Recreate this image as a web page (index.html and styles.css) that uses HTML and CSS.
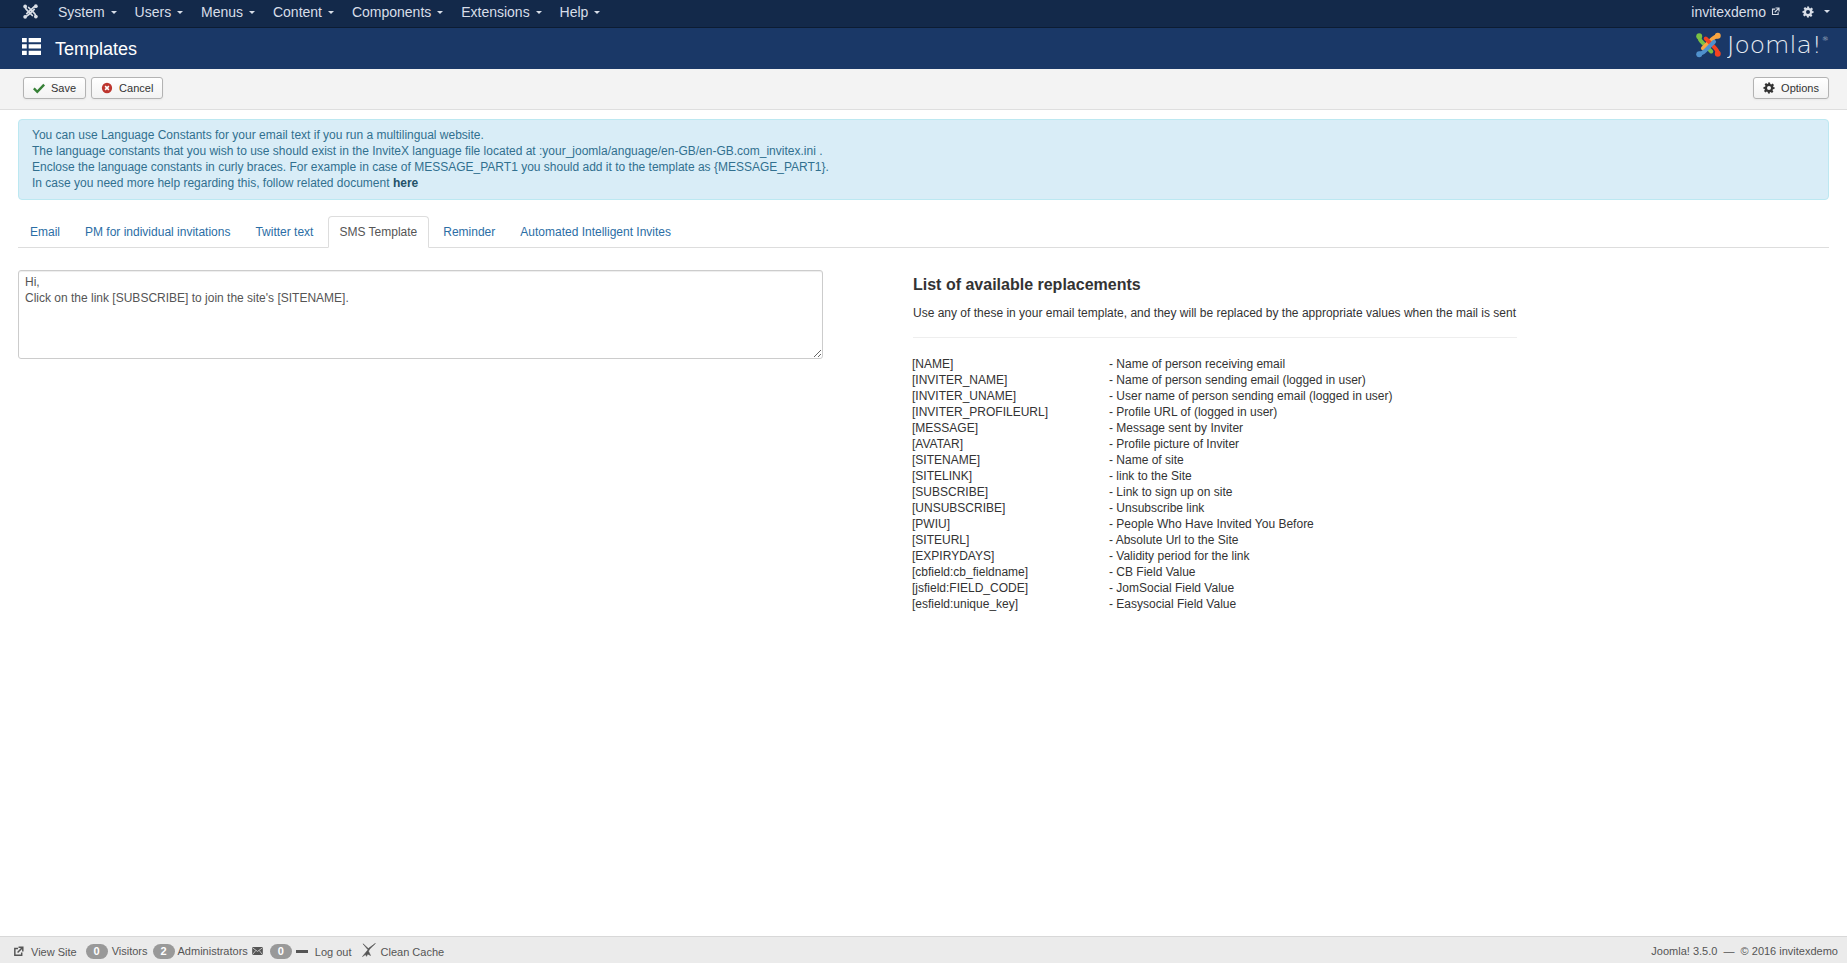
FILE: index.html
```html
<!DOCTYPE html>
<html lang="en">
<head>
<meta charset="utf-8">
<title>Templates</title>
<link rel="stylesheet" href="styles.css">
</head>
<body>
<div class="page">
  <nav class="navbar">
    <svg class="nav-logo" viewBox="0 0 28 28">
      <g fill="none" stroke="#d9dee6" stroke-width="3.200" stroke-linecap="round" stroke-linejoin="round">
        <path d="M4 5c0 3 1.500 4.500 3.500 6.500L17.500 21.500"/>
        <path d="M24 4.500c-3 0-4.500 1.500-6.500 3.500L7 18"/>
        <path d="M24 23c0-3-1.500-4.500-3.500-6.500L10.500 6.500"/>
        <path d="M4 23.500c3 0 4.500-1.500 6.500-3.500L21 10"/>
      </g>
      <g fill="#d9dee6"><circle cx="4" cy="4.500" r="3.500"/><circle cx="24" cy="4" r="3.500"/><circle cx="24" cy="23.500" r="3.500"/><circle cx="4" cy="24" r="3.500"/></g>
    </svg>
    <ul class="nav-menu">
      <li>System <i class="caret"></i></li>
      <li>Users <i class="caret"></i></li>
      <li>Menus <i class="caret"></i></li>
      <li>Content <i class="caret"></i></li>
      <li>Components <i class="caret"></i></li>
      <li>Extensions <i class="caret"></i></li>
      <li>Help <i class="caret"></i></li>
    </ul>
    <div class="nav-right">
      <span class="nav-user">invitexdemo
        <svg class="ext" viewBox="0 0 12 12"><path d="M9.500 7v3H2V2.800h3.500M6 1.300h4.700V6M10.500 1.500 5 7" fill="none" stroke="currentColor" stroke-width="1.500"/></svg>
      </span>
      <span class="nav-gear">
        <svg class="gear" viewBox="0 0 24 24"><path fill="currentColor" fill-rule="evenodd" d="M10 1h4l.6 3.200 1.900.8 2.700-1.800 2.800 2.800-1.800 2.700.8 1.900L23 10v4l-3.200.6-.8 1.900 1.800 2.700-2.800 2.800-2.700-1.800-1.900.8L14 23h-4l-.6-3.200-1.900-.8-2.700 1.800-2.800-2.800 1.800-2.700-.8-1.900L1 14v-4l3.200-.6.8-1.900-1.800-2.700 2.800-2.800 2.700 1.800 1.900-.8zM12 8a4 4 0 1 0 0 8 4 4 0 0 0 0-8z"/></svg>
        <i class="caret"></i>
      </span>
    </div>
  </nav>

  <header class="title-bar">
    <svg class="list-icon" viewBox="0 0 20 18"><path fill="#fff" d="M0 0h5v4.500H0zM7 0h13v4.500H7zM0 6.700h5v4.500H0zM7 6.700h13v4.500H7zM0 13.400h5v4.600H0zM7 13.400h13v4.600H7z"/></svg>
    <h1 class="page-title">Templates</h1>
    <div class="brand">
      <svg class="brand-mark" viewBox="0 0 28 28">
        <g fill="none" stroke-width="4.200" stroke-linecap="round" stroke-linejoin="round">
          <path stroke="#7ac143" d="M4 5c0 3 1.500 4.500 3.500 6.500L17 21"/>
          <path stroke="#f9a541" d="M24 4.500c-3 0-4.500 1.500-6.500 3.500L8 17.500"/>
          <path stroke="#f44321" d="M24 23c0-3-1.500-4.500-3.500-6.500L11 7"/>
          <path stroke="#5091cd" d="M4 23.500c3 0 4.500-1.500 6.500-3.500L20 10.500"/>
        </g>
        <g><circle cx="4" cy="4.500" r="3.200" fill="#7ac143"/><circle cx="24" cy="4" r="3.200" fill="#f9a541"/><circle cx="24" cy="23.500" r="3.200" fill="#f44321"/><circle cx="4" cy="24" r="3.200" fill="#5091cd"/></g>
      </svg>
      <span class="brand-name">Joomla!<sup class="reg">®</sup></span>
    </div>
  </header>

  <div class="toolbar">
    <div class="btn-group">
      <button class="btn">
        <svg class="btn-ico" viewBox="0 0 14 12"><path d="M1 6.500 5 10.500 13 2" fill="none" stroke="#378137" stroke-width="2.800"/></svg>Save
      </button>
      <button class="btn">
        <svg class="btn-ico" viewBox="0 0 14 14"><circle cx="7" cy="7" r="6" fill="#bd362f"/><path d="M4.800 4.800l4.400 4.400M9.200 4.800l-4.400 4.400" stroke="#fff" stroke-width="1.800"/></svg>Cancel
      </button>
    </div>
    <button class="btn">
      <svg class="btn-ico" viewBox="0 0 24 24"><path fill="#333" fill-rule="evenodd" d="M10 1h4l.6 3.200 1.900.8 2.700-1.800 2.800 2.800-1.800 2.700.8 1.900L23 10v4l-3.200.6-.8 1.900 1.800 2.700-2.800 2.800-2.700-1.800-1.900.8L14 23h-4l-.6-3.200-1.900-.8-2.700 1.800-2.800-2.800 1.800-2.700-.8-1.900L1 14v-4l3.200-.6.8-1.900-1.800-2.700 2.800-2.800 2.700 1.800 1.900-.8zM12 8a4 4 0 1 0 0 8 4 4 0 0 0 0-8z"/></svg>Options
    </button>
  </div>

  <main class="content">
    <div class="alert">
      You can use Language Constants for your email text if you run a multilingual website.<br>
      The language constants that you wish to use should exist in the InviteX language file located at :your_joomla/anguage/en-GB/en-GB.com_invitex.ini .<br>
      Enclose the language constants in curly braces. For example in case of MESSAGE_PART1 you should add it to the template as {MESSAGE_PART1}.<br>
      In case you need more help regarding this, follow related document <a class="alert-link" href="#">here</a>
    </div>

    <ul class="tabs">
      <li class="tab">Email</li>
      <li class="tab">PM for individual invitations</li>
      <li class="tab">Twitter text</li>
      <li class="tab tab-active">SMS Template</li>
      <li class="tab">Reminder</li>
      <li class="tab">Automated Intelligent Invites</li>
    </ul>

    <div class="columns">
      <textarea class="sms-text" rows="5">Hi,
Click on the link [SUBSCRIBE] to join the site's [SITENAME].</textarea>
      <section class="replacements">
        <h2 class="rep-title">List of available replacements</h2>
        <p class="rep-lead">Use any of these in your email template, and they will be replaced by the appropriate values when the mail is sent</p>
        <hr class="rep-rule">
        <dl class="rep-list">
          <dt>[NAME]</dt><dd>- Name of person receiving email</dd>
          <dt>[INVITER_NAME]</dt><dd>- Name of person sending email (logged in user)</dd>
          <dt>[INVITER_UNAME]</dt><dd>- User name of person sending email (logged in user)</dd>
          <dt>[INVITER_PROFILEURL]</dt><dd>- Profile URL of (logged in user)</dd>
          <dt>[MESSAGE]</dt><dd>- Message sent by Inviter</dd>
          <dt>[AVATAR]</dt><dd>- Profile picture of Inviter</dd>
          <dt>[SITENAME]</dt><dd>- Name of site</dd>
          <dt>[SITELINK]</dt><dd>- link to the Site</dd>
          <dt>[SUBSCRIBE]</dt><dd>- Link to sign up on site</dd>
          <dt>[UNSUBSCRIBE]</dt><dd>- Unsubscribe link</dd>
          <dt>[PWIU]</dt><dd>- People Who Have Invited You Before</dd>
          <dt>[SITEURL]</dt><dd>- Absolute Url to the Site</dd>
          <dt>[EXPIRYDAYS]</dt><dd>- Validity period for the link</dd>
          <dt>[cbfield:cb_fieldname]</dt><dd>- CB Field Value</dd>
          <dt>[jsfield:FIELD_CODE]</dt><dd>- JomSocial Field Value</dd>
          <dt>[esfield:unique_key]</dt><dd>- Easysocial Field Value</dd>
        </dl>
      </section>
    </div>
  </main>

  <footer class="status">
    <div class="status-left">
      <span class="st-item">
        <svg class="st-ico" viewBox="0 0 12 12"><path d="M9.500 7v3H2V2.800h3.500M6 1.300h4.700V6M10.500 1.500 5 7" fill="none" stroke="currentColor" stroke-width="1.600"/></svg>
        View Site
      </span>
      <span class="st-users st-first"><b class="badge">0</b><span class="st-label">Visitors</span></span>
      <span class="st-users"><b class="badge">2</b><span class="st-label">Administrators</span></span>
      <svg class="st-mail" viewBox="0 0 12 9"><rect width="12" height="9" rx="1" fill="currentColor"/><path d="M.5 1 6 5l5.500-4M.5 8.500 4 4M11.500 8.500 8 4" fill="none" stroke="#ebebeb" stroke-width=".8"/></svg>
      <b class="badge">0</b>
      <span class="st-item">
        <i class="minus"></i>
        Log out
      </span>
      <span class="st-item">
        <svg class="st-broom" viewBox="0 0 14 14"><path d="M13.500 .3 6.300 5.600 1 .8l5 6L.5 13.500l3-2 1 1.800 1.200-2.300 2.800 1.500-2-4.300 1-2z" fill="#555" stroke="#555" stroke-width=".6" stroke-linejoin="round"/></svg>
        Clean Cache
      </span>
    </div>
    <div class="status-right">Joomla! 3.5.0 &nbsp;&mdash;&nbsp; © 2016 invitexdemo</div>
  </footer>
</div>
</body>
</html>
```

FILE: styles.css
```css
* { box-sizing: border-box; }
html, body { height: 100%; margin: 0; }
body {
  font-family: "Liberation Sans", Arial, sans-serif;
  font-size: 12px;
  line-height: 16px;
  color: #333;
  background: #fff;
}
.page { display: flex; flex-direction: column; height: 100%; }

.navbar {
  display: flex;
  align-items: center;
  height: 28px;
  flex: none;
  padding: 0 17px 4px 23px;
  background: #13294a;
  border-bottom: 1px solid #0c1c33;
  color: #d8dee8;
  font-size: 14px;
}
.nav-logo { width: 15px; height: 15px; margin-right: 20px; flex: none; }
.nav-menu { display: flex; gap: 18px; margin: 0; padding: 0; list-style: none; }
.caret {
  display: inline-block;
  width: 0;
  height: 0;
  margin-left: 2px;
  vertical-align: middle;
  border-top: 3px solid currentColor;
  border-left: 3px solid transparent;
  border-right: 3px solid transparent;
}
.nav-right { display: flex; align-items: center; gap: 22px; margin-left: auto; }
.nav-user { display: flex; align-items: center; gap: 5px; }
.ext { width: 9px; height: 9px; }
.nav-gear { display: flex; align-items: center; gap: 8px; }
.gear { width: 12px; height: 12px; }

.title-bar {
  display: flex;
  align-items: center;
  flex: none;
  height: 41px;
  padding: 0 22px;
  background: #1a3867;
  color: #fff;
}
.list-icon { width: 19px; height: 19px; margin-top: -5px; flex: none; }
.page-title { margin: 0 0 0 14px; font-size: 18px; font-weight: 400; line-height: 24px; }
.brand { display: flex; align-items: center; margin-left: auto; margin-top: -7px; }
.brand-mark { width: 27px; height: 26px; }
.brand-name {
  width: 98px;
  margin-left: 5px;
  font-family: "DejaVu Sans", sans-serif;
  font-weight: 200;
  font-size: 23px;
  line-height: 26px;
  white-space: nowrap;
  color: #e6ebf2;
  transform: scaleX(1.09);
  transform-origin: left center;
}
.reg { font-size: 6px; vertical-align: top; line-height: 14px; }

.toolbar {
  display: flex;
  justify-content: space-between;
  align-items: center;
  flex: none;
  height: 41px;
  padding: 0 18px 2px 23px;
  background: #f3f3f3;
  border-bottom: 1px solid #dedede;
}
.btn-group { display: flex; gap: 5px; }
.btn {
  display: flex;
  align-items: center;
  gap: 6px;
  height: 22px;
  padding: 0 9px;
  font-family: inherit;
  font-size: 11px;
  line-height: 14px;
  color: #333;
  background: linear-gradient(#fff, #f2f2f2);
  border: 1px solid #b3b3b3;
  border-radius: 3px;
  box-shadow: 0 1px 2px rgba(0,0,0,.05);
}
.btn-ico { width: 12px; height: 12px; }

.content { flex: 1; padding: 9px 18px 0; min-height: 0; }
.alert {
  height: 81px;
  padding: 7px 13px;
  color: #31708f;
  background: #d9edf7;
  border: 1px solid #bce8f1;
  border-radius: 4px;
}
.alert-link { color: #245269; font-weight: 700; text-decoration: none; }

.tabs {
  display: flex;
  margin: 16px 0 0;
  padding: 0;
  list-style: none;
  height: 32px;
  border-bottom: 1px solid #ddd;
}
.tab {
  height: 32px;
  padding: 7px 11px 0;
  margin-right: 1px;
  color: #2b6ea5;
  border: 1px solid transparent;
  border-radius: 4px 4px 0 0;
}
.tab-active {
  margin: 0 2px 0 2px;
  padding-left: 10px;
  color: #555;
  background: #fff;
  border-color: #ddd #ddd #fff;
}

.columns { display: flex; align-items: flex-start; margin-top: 22px; }
.sms-text {
  display: block;
  width: 805px;
  height: 89px;
  margin: 0;
  padding: 3px 6px;
  font: inherit;
  color: #555;
  border: 1px solid #ccc;
  border-radius: 3px;
  box-shadow: inset 0 1px 1px rgba(0,0,0,.075);
  resize: both;
}
.replacements { width: 605px; margin-left: 89px; }
.rep-title { margin: 6px 0 0 1px; font-size: 16px; line-height: 18px; font-weight: 700; }
.rep-lead { margin: 11px 0 0 1px; }
.rep-rule { margin: 16px 0 0 1px; border: 0; border-top: 1px solid #eee; }
.rep-list {
  display: grid;
  grid-template-columns: 197px 1fr;
  margin: 18px 0 0;
}
.rep-list dt { font-weight: 400; }
.rep-list dd { margin: 0; }

.status {
  display: flex;
  justify-content: space-between;
  align-items: center;
  flex: none;
  height: 27px;
  padding: 3px 9px 0 13px;
  font-size: 11px;
  color: #555;
  background: #ebebeb;
  border-top: 1px solid #d8d8d8;
}
.status-left { display: flex; align-items: center; }
.st-item { display: flex; align-items: center; }
.st-ico { width: 11px; height: 11px; margin-right: 7px; }
.st-users { display: flex; align-items: center; gap: 3px; margin-left: 5px; }
.st-first { gap: 4px; margin-left: 9px; }
.st-label { margin-top: -2px; }
.status-right { margin-top: -2px; }
.badge {
  display: inline-block;
  min-width: 22px;
  height: 15px;
  padding: 0 7px;
  font-weight: 700;
  font-size: 11px;
  line-height: 15px;
  text-align: center;
  color: #fff;
  background: #999;
  border-radius: 9px;
}
.st-mail { width: 11px; height: 8px; margin: -2px 7px 0 4px; color: #555; }
.minus { width: 12px; height: 3px; margin: 0 7px 0 4px; background: #555; }
.st-broom { width: 14px; height: 14px; margin: -4px 5px 0 10px; }
```
